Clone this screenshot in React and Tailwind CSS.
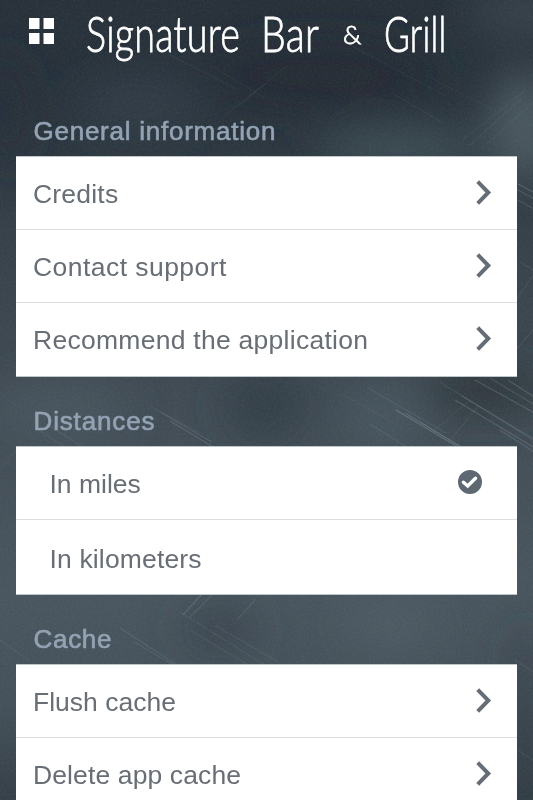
const sections = [
  {
    title: 'General information',
    tracking: 'tracking-[0.75px]',
    rows: [
      { label: 'Credits', height: 'h-[73px]', tracking: 'tracking-[0.2px]' },
      { label: 'Contact support', height: 'h-[73px]', tracking: 'tracking-[0.45px]' },
      { label: 'Recommend the application', height: 'h-[73px]', tracking: 'tracking-[0.27px]' },
    ],
  },
  {
    title: 'Distances',
    tracking: 'tracking-[0.85px]',
    rows: [
      { label: 'In miles', height: 'h-[73px]', tracking: 'tracking-normal', option: true, checked: true },
      { label: 'In kilometers', height: 'h-[74px]', tracking: 'tracking-[0.15px]', option: true },
    ],
  },
  {
    title: 'Cache',
    tracking: 'tracking-[0.7px]',
    rows: [
      { label: 'Flush cache', height: 'h-[73px]', tracking: 'tracking-normal' },
      { label: 'Delete app cache', height: 'h-[74px]', tracking: 'tracking-[0.12px]' },
    ],
  },
];

// [x, y, length, angle, opacity]
const scratches = [
  [170, 55, 75, 27, 0.08], [210, 65, 90, 31, 0.06], [225, 115, 50, -38, 0.08],
  [240, 105, 60, -40, 0.06], [350, 45, 110, 28, 0.07], [395, 95, 55, 30, 0.08],
  [425, 75, 80, 27, 0.06], [470, 145, 70, -42, 0.1], [480, 150, 70, -42, 0.08],
  [462, 140, 80, -38, 0.07], [518, 184, 40, 28, 0.28], [514, 188, 40, 28, 0.2],
  [518, 200, 40, 30, 0.18], [520, 262, 40, 32, 0.13], [516, 300, 40, -55, 0.13],
  [516, 350, 40, -50, 0.13], [368, 388, 90, 30, 0.13], [396, 410, 75, 31, 0.32],
  [405, 413, 70, 31, 0.24], [420, 422, 60, 32, 0.16], [455, 400, 110, 31, 0.26],
  [462, 396, 100, 31, 0.2], [475, 380, 80, 29, 0.24], [490, 378, 70, 31, 0.18],
  [508, 380, 40, 33, 0.24], [440, 382, 110, 32, 0.12], [450, 440, 45, -50, 0.12],
  [432, 432, 50, -40, 0.08], [160, 412, 60, 30, 0.18], [170, 421, 50, 31, 0.22],
  [150, 406, 60, 28, 0.08], [50, 426, 55, 33, 0.13], [36, 428, 50, 33, 0.1],
  [500, 430, 40, 33, 0.22], [370, 424, 45, 32, 0.15], [340, 393, 60, 29, 0.08],
  [183, 615, 30, -48, 0.25], [190, 617, 35, -45, 0.18], [180, 612, 110, 32, 0.1],
  [190, 630, 85, 31, 0.1], [120, 628, 90, 33, 0.14], [134, 642, 65, 30, 0.12],
  [237, 620, 28, -48, 0.15], [216, 626, 70, 30, 0.1], [515, 660, 30, 33, 0.12],
  [518, 750, 30, 35, 0.1], [0, 640, 35, 35, 0.1], [0, 470, 30, -50, 0.08],
];

function Backdrop() {
  return (
    <svg className="absolute inset-0" width="533" height="800" viewBox="0 0 533 800">
      <defs>
        <linearGradient id="base" x1="0" y1="0" x2="0" y2="1">
          <stop offset="0" stopColor="#28313a" />
          <stop offset="0.13" stopColor="#29333c" />
          <stop offset="0.3" stopColor="#364149" />
          <stop offset="0.52" stopColor="#424d56" />
          <stop offset="0.75" stopColor="#4a565f" />
          <stop offset="0.88" stopColor="#45515a" />
          <stop offset="1" stopColor="#343f47" />
        </linearGradient>
        <filter id="soft" x="-50%" y="-50%" width="200%" height="200%">
          <feGaussianBlur stdDeviation="20" />
        </filter>
        <filter id="grain" x="0" y="0" width="100%" height="100%">
          <feTurbulence type="fractalNoise" baseFrequency="0.5" numOctaves="2" seed="4" />
          <feColorMatrix values="0 0 0 0 0.7  0 0 0 0 0.8  0 0 0 0 0.85  0.5 0 0 0 -0.17" />
        </filter>
      </defs>
      <rect width="533" height="800" fill="url(#base)" />
      <g filter="url(#soft)">
        <ellipse cx="320" cy="75" rx="120" ry="35" fill="#222a33" opacity="0.7" />
        <ellipse cx="5" cy="110" rx="25" ry="60" fill="#232c35" opacity="0.6" />
        <ellipse cx="525" cy="125" rx="38" ry="55" fill="#55656d" opacity="0.75" />
        <ellipse cx="400" cy="150" rx="80" ry="22" fill="#485960" opacity="0.75" />
        <ellipse cx="140" cy="105" rx="65" ry="28" fill="#39464e" opacity="0.6" />
        <ellipse cx="530" cy="12" rx="65" ry="25" fill="#404d55" opacity="0.7" />
        <ellipse cx="265" cy="405" rx="42" ry="38" fill="#2d3b43" opacity="0.7" />
        <ellipse cx="485" cy="390" rx="60" ry="25" fill="#293239" opacity="0.8" />
        <ellipse cx="385" cy="415" rx="40" ry="35" fill="#505f67" opacity="0.5" />
        <ellipse cx="60" cy="410" rx="70" ry="30" fill="#4b5962" opacity="0.7" />
        <ellipse cx="220" cy="630" rx="40" ry="24" fill="#354149" opacity="0.75" />
        <ellipse cx="390" cy="625" rx="45" ry="25" fill="#55636b" opacity="0.5" />
        <ellipse cx="525" cy="720" rx="14" ry="100" fill="#2a343d" opacity="0.65" />
      </g>
      <g stroke="#a7b8c0" strokeWidth="1">
        {scratches.map(([x, y, length, angle, opacity], i) => (
          <line
            key={i}
            x1={x}
            y1={y}
            x2={x + length}
            y2={y}
            opacity={opacity}
            transform={`rotate(${angle} ${x} ${y})`}
          />
        ))}
      </g>
      <rect width="533" height="800" filter="url(#grain)" opacity="0.2" />
    </svg>
  );
}

function MenuIcon() {
  return (
    <svg className="mt-[18px] shrink-0" width="25" height="26" viewBox="0 0 25 26" fill="#fff">
      <path d="M0 0H10.5V11H0ZM14.5 0H25V11H14.5ZM0 15H10.5V26H0ZM14.5 15H25V26H14.5Z" />
    </svg>
  );
}

// tall condensed lettering, each word squeezed to its own box
function Wordmark() {
  return (
    <h1 className="ml-[32px] flex pt-1 font-['Lato',sans-serif] text-[49px] leading-[58px] font-light tracking-[0.3px] whitespace-nowrap text-white [-webkit-text-stroke:0.8px_#fff]">
      <span className="w-[175px]"><span className="inline-block origin-left scale-x-[0.77]">Signature</span></span>
      <span className="w-[82px]"><span className="inline-block origin-left scale-x-[0.8]">Bar</span></span>
      <span className="w-[41px] pt-px text-[26px] leading-[58px]">&amp;</span>
      <span className="w-[64px]"><span className="inline-block origin-left scale-x-[0.72]">Grill</span></span>
    </h1>
  );
}

function Chevron() {
  return (
    <svg width="16" height="26" viewBox="0 0 16 26" fill="none" stroke="#656d76" strokeWidth="4">
      <path d="M1.7 1.7L12.3 12.5L1.7 23.3" />
    </svg>
  );
}

function Check() {
  return (
    <svg width="24" height="24" viewBox="0 0 24 24">
      <circle cx="12" cy="12" r="12" fill="#5d6872" />
      <path d="M5.4 12.2L9.7 16L17.5 8.2" fill="none" stroke="#fff" strokeWidth="3.4" strokeLinecap="round" />
    </svg>
  );
}

export default function App() {
  return (
    <div className="relative h-[800px] w-[533px] overflow-hidden bg-[#3d4952] font-['Liberation_Sans',Arial,sans-serif] text-[26.5px] leading-[30px]">
      <Backdrop />

      <div className="relative">
        <header className="flex h-[87px] items-start pl-[29px]">
          <MenuIcon />
          <Wordmark />
        </header>

        {sections.map(section => (
          <section key={section.title} className="px-4">
            <h2 className={`h-[69px] pt-[29px] pl-[17.5px] text-[26px] text-[#94a3b4] [-webkit-text-stroke:0.6px_#94a3b4] ${section.tracking}`}>
              {section.title}
            </h2>
            <ul className="w-[501px] divide-y divide-[#dcdee0] border-y border-[#bfc6ca] bg-white text-[#686e75]">
              {section.rows.map(row => (
                <li
                  key={row.label}
                  className={`flex items-start justify-between ${row.height} ${
                    row.option ? 'pr-[35px] pl-[33.5px]' : 'pr-[25px] pl-[17px]'
                  } ${row.option && !row.checked ? 'pt-6' : 'pt-[22px]'}`}
                >
                  <span className={row.tracking}>{row.label}</span>
                  {row.checked && <span className="mt-px"><Check /></span>}
                  {!row.option && <span className="mt-px"><Chevron /></span>}
                </li>
              ))}
            </ul>
          </section>
        ))}
      </div>
    </div>
  );
}
